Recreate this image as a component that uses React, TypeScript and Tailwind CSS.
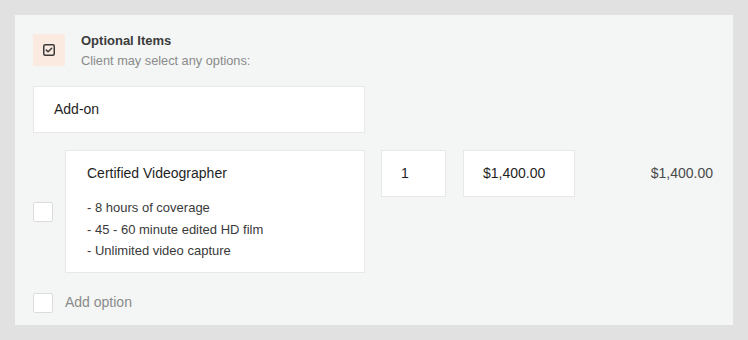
import React from "react";

function CheckIcon() {
  return (
    <svg width="12" height="12" viewBox="0 0 12 12" fill="none">
      <rect x="0.75" y="0.75" width="10.5" height="10.5" rx="1.5" stroke="#3a3a3a" strokeWidth="1.5" />
      <path d="M3.3 6.1 L5.1 7.8 L8.7 4.3" stroke="#3a3a3a" strokeWidth="1.5" strokeLinecap="round" strokeLinejoin="round" />
    </svg>
  );
}

export default function App() {
  return (
    <div className="w-[748px] h-[340px] bg-[#e1e1e1] p-[15px]" style={{ fontFamily: '"Liberation Sans", Arial, sans-serif' }}>
      <div className="h-[310px] w-[718px] bg-[#f4f6f5] pt-[19px] px-[18px]">
        <div className="flex h-[32px]">
          <div className="w-[32px] h-[32px] bg-[#fbeadf] flex items-center justify-center">
            <CheckIcon />
          </div>
          <div className="ml-[16px]">
            <div className="text-[13px] leading-[14px] font-bold text-[#3b3b3b] mt-0">Optional Items</div>
            <div className="text-[12.75px] leading-[14px] text-[#8a8a8a] mt-[6px]">Client may select any options:</div>
          </div>
        </div>
        <div className="mt-[20px] w-[332px] h-[47px] bg-white border border-[#e8e8e8] flex items-center pl-[20px] text-[14px] text-[#1f1f1f]">
          Add-on
        </div>
        <div className="mt-[17px] flex items-start">
          <div className="self-center w-[20px] h-[20px] bg-white border border-[#dcdcdc] rounded-[2px]" />
          <div className="ml-[12px] w-[300px] h-[123px] bg-white border border-[#e8e8e8] pl-[21px] pt-[14px]">
            <div className="text-[14px] leading-[16px] text-[#1f1f1f]">Certified Videographer</div>
            <div className="mt-[16px] text-[13px] leading-[21.5px] text-[#3a3a3a]">
              <div>- 8 hours of coverage</div>
              <div>- 45 - 60 minute edited HD film</div>
              <div>- Unlimited video capture</div>
            </div>
          </div>
          <div className="ml-[16px] w-[65px] h-[47px] bg-white border border-[#e8e8e8] flex items-center pl-[19px] text-[14px] text-[#1f1f1f]">1</div>
          <div className="ml-[17px] w-[112px] h-[47px] bg-white border border-[#e8e8e8] flex items-center pl-[19px] text-[14px] text-[#1f1f1f]">$1,400.00</div>
          <div className="flex-1 h-[47px] flex items-center justify-end pr-[2px] text-[14px] text-[#4a4a4a]">$1,400.00</div>
        </div>
        <div className="mt-[19px] flex items-center">
          <div className="w-[20px] h-[20px] bg-white border border-[#dcdcdc] rounded-[2px]" />
          <div className="ml-[12px] text-[14px] text-[#8a8a8a]">Add option</div>
        </div>
      </div>
    </div>
  );
}
